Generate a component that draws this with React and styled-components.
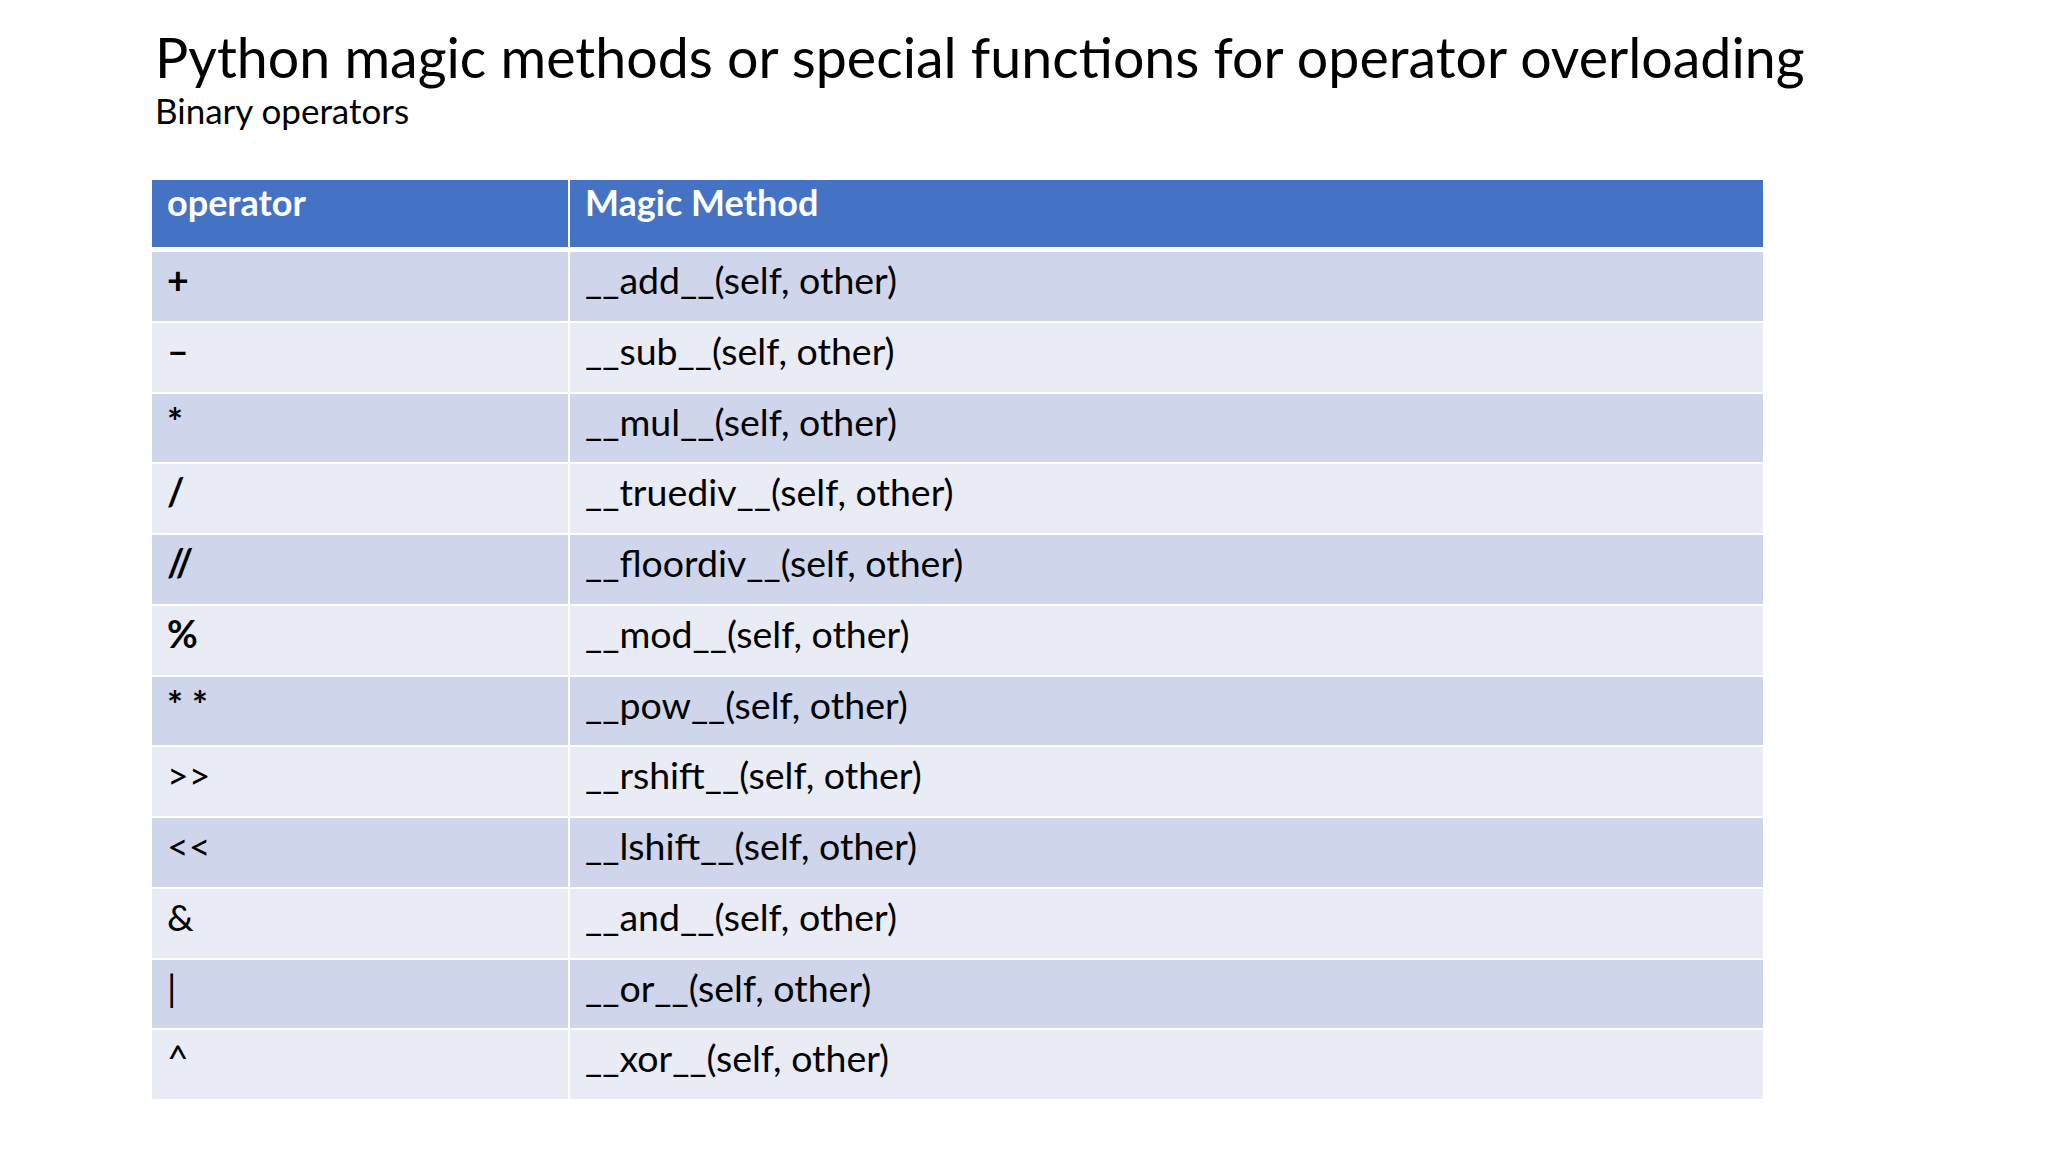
import React from 'react'
import styled, { createGlobalStyle } from 'styled-components'

const GlobalStyle = createGlobalStyle`
    html, body {
        margin: 0;
        padding: 0;
        background: #ffffff;
    }
    body {
        font-family: Lato, "Open Sans", sans-serif;
        color: #000;
    }
`

const Slide = styled.div`
    width: 2048px;
    height: 1152px;
    box-sizing: border-box;
    padding: 29px 0 0 152px;
    background: #fff;
`

const Heading = styled.div`
    padding-left: 3px;
`

const Title = styled.h1`
    margin: 0;
    font-weight: 400;
    font-size: 55.5px;
    line-height: 1;
    white-space: nowrap;
`

const Subtitle = styled.h2`
    margin: 8px 0 0;
    font-weight: 400;
    font-size: 35px;
    line-height: 1;
`

const Table = styled.div`
    margin-top: 52.5px;
    width: 1611px;
    display: grid;
    grid-template-columns: 416px 1fr;
    column-gap: 2px;
    row-gap: 2px;
    background: #fff;
`

const HeaderCell = styled.div`
    height: 67px;
    margin-bottom: 3px;
    box-sizing: border-box;
    padding: 1px 15px 0;
    background: #4472c4;
    color: #fff;
    font-weight: 700;
    font-size: 36px;
    line-height: 1.2;
`

const Cell = styled.div`
    height: 68.75px;
    box-sizing: border-box;
    padding: 5px 15px 0;
    background: ${p => (p.odd ? '#cfd5ea' : '#e9ebf5')};
    font-size: 37.5px;
    line-height: 1.2;
    white-space: nowrap;
`

const Op = styled.span`
    font-weight: ${p => (p.heavy ? 700 : 400)};
`

const rows = [
    ['+', '__add__(self, other)', true],
    ['\u2013', '__sub__(self, other)', true],
    ['*', '__mul__(self, other)', true],
    ['/', '__truediv__(self, other)', true],
    ['//', '__floordiv__(self, other)', true],
    ['%', '__mod__(self, other)', true],
    ['* *', '__pow__(self, other)', true],
    ['>>', '__rshift__(self, other)', false],
    ['<<', '__lshift__(self, other)', false],
    ['&', '__and__(self, other)', false],
    ['|', '__or__(self, other)', false],
    ['^', '__xor__(self, other)', false],
]

export default function App() {
    return (
        <>
            <GlobalStyle />
            <Slide>
                <Heading>
                    <Title>Python magic methods or special functions for operator overloading</Title>
                    <Subtitle>Binary operators</Subtitle>
                </Heading>
                <Table>
                    <HeaderCell>operator</HeaderCell>
                    <HeaderCell>Magic Method</HeaderCell>
                    {rows.map(([op, method, heavy], k) => (
                        <React.Fragment key={k}>
                            <Cell odd={k % 2 === 0}><Op heavy={heavy}>{op}</Op></Cell>
                            <Cell odd={k % 2 === 0}>{method}</Cell>
                        </React.Fragment>
                    ))}
                </Table>
            </Slide>
        </>
    )
}
